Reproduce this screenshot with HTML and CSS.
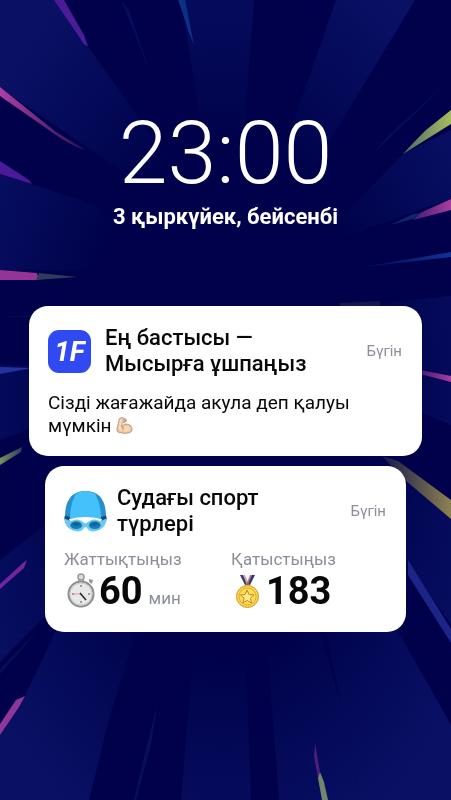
FILE: index.html
```
<!DOCTYPE html>
<html lang="kk">
<head>
    <meta charset="UTF-8">
    <meta name="viewport" content="width=device-width, initial-scale=1.0">
    <title>Хабарландырулар</title>
    <link rel="stylesheet" href="styles.css">
</head>
<body>
    <!-- Фон с лучами -->
    <svg class="rays" viewBox="0 0 451 800" preserveAspectRatio="xMidYMid slice" aria-hidden="true">
        <defs>
            <radialGradient id="beam" gradientUnits="userSpaceOnUse" cx="0" cy="0" r="1" gradientTransform="translate(225 400) scale(290 490)">
                <stop offset="0.52" stop-color="#00014a"/>
                <stop offset="0.75" stop-color="#040a58"/>
                <stop offset="1" stop-color="#0a1064"/>
            </radialGradient>
            <linearGradient id="pinkLeft">
                <stop offset="0" stop-color="#ac3fa4"/>
                <stop offset="1" stop-color="#241053"/>
            </linearGradient>
            <linearGradient id="pinkRight">
                <stop offset="0" stop-color="#421b74"/>
                <stop offset="1" stop-color="#a83e9f"/>
            </linearGradient>
            <linearGradient id="blueRight">
                <stop offset="0" stop-color="#030958"/>
                <stop offset="1" stop-color="#123293"/>
            </linearGradient>
            <linearGradient id="limeRight">
                <stop offset="0" stop-color="#4c6a68"/>
                <stop offset="1" stop-color="#a6bd5b"/>
            </linearGradient>
            <linearGradient id="goldRight">
                <stop offset="0" stop-color="#15164c"/>
                <stop offset="1" stop-color="#8d8250"/>
            </linearGradient>
            <linearGradient id="limeLeft">
                <stop offset="0" stop-color="#76915f"/>
                <stop offset="1" stop-color="#303c5b"/>
            </linearGradient>
        </defs>
        <rect width="451" height="800" fill="#00014a"/>
        <g fill="url(#beam)">
            <path d="M0 0H55L87 45L225 240L150 190L0 88Z"/>
            <path d="M181 0H254L240 190H212Z"/>
            <path d="M336 0H415L300 190H270Z"/>
            <path d="M451 130V198L310 250L403 154Z"/>
            <path d="M0 174L95 205L180 270L0 270Z"/>
            <path d="M451 296V425L320 370V310Z"/>
            <path d="M0 365L130 370V390L0 440Z"/>
            <path d="M0 560L130 460V530L0 662Z"/>
            <path d="M400 465L451 519V625L330 450Z"/>
            <path d="M80 580L24 698L0 735V800H89L110 715L150 590Z"/>
            <path d="M198 600L181 800H251L244 600Z"/>
            <path d="M264 600L279 800H360L341 705L310 600Z"/>
            <path d="M380 600L451 725V800H360L341 705L320 600Z"/>
        </g>
        <path d="M54 0H64L84 35L88 46Q83 45 80 38Z" fill="#4b1b98"/>
        <path d="M121 0L129 10L150 72Z" fill="#060c5b"/>
        <path d="M178 0H185L194 45Q188 32 185 20Z" fill="#0c3086"/>
        <path d="M0 87L56 132L87 151Q70 145 56 135L0 96Z" fill="url(#pinkLeft)"/>
        <path d="M0 161L29 180L32 184L0 174Z" fill="#4b1a9b"/>
        <path d="M0 270L37 273L39 280H0Z" fill="#943596"/>
        <path d="M39 273L77 277L36 280Z" fill="#333b5c"/>
        <path d="M451 79L372 155L388 136Z" fill="#060e54"/>
        <path d="M451 110V124L403 154Q412 144 426 130Z" fill="url(#limeRight)"/>
        <path d="M451 199V210L413 220L420 213Z" fill="url(#pinkRight)"/>
        <path d="M390 225L413 214L421 213L413 219Z" fill="#0d2470"/>
        <path d="M363 267L451 252V257Z" fill="url(#blueRight)"/>
        <path d="M340 303L380 301V306H340Z" fill="#14154e"/>
        <path d="M420 370L451 376V382L420 374Z" fill="url(#pinkRight)"/>
        <path d="M0 367L32 368L0 374Z" fill="#2531a0"/>
        <path d="M0 317L30 315L30 317Z" fill="#040b53"/>
        <path d="M0 458L20 448L22 447L21 452L0 465Z" fill="url(#limeLeft)"/>
        <path d="M382 456L398 461L451 500V519L405 480Z" fill="url(#goldRight)"/>
        <path d="M408 560L451 629V643L408 575Z" fill="#1c2486"/>
        <path d="M0 584L24 562L27 560L24 568L0 589Z" fill="#6f279b"/>
        <path d="M0 669L40 628L20 652L0 674Z" fill="#060d52"/>
        <path d="M0 724L16 700L25 696L19 707L0 735Z" fill="#8d3798"/>
        <path d="M157 705L151 745L136 800H134L147 745Z" fill="#080f5a"/>
        <path d="M315 743L320 772L318 778L314 757Z" fill="#4d1d79"/>
        <path d="M320 772L324 782L328 800H322L318 778Z" fill="#71866c"/>
    </svg>

    <main class="lock-screen">
        <header class="clock">
            <time class="clock-time">23:00</time>
            <p class="clock-date">3 қыркүйек, бейсенбі</p>
        </header>

        <section class="notifications">
            <article class="card">
                <div class="card-head">
                    <div class="app-icon">1F</div>
                    <h2 class="card-title">Ең бастысы —<br>Мысырға ұшпаңыз</h2>
                    <span class="card-date">Бүгін</span>
                </div>
                <p class="card-text">Сізді жағажайда акула деп қалуы<br>мүмкін
                    <svg class="emoji" viewBox="0 0 36 36" role="img" aria-label="Бицепс">
                        <path d="M9 2Q15 0 19 4Q23 4 22 9L17 12Q14 12 13 10L12 20Q17 13 24 15Q33 17 34 24Q35 30 30 33Q18 37 4 32Q0 29 3 21L6 8Q6 3 9 2Z" fill="#e9c6a0" stroke="#a98566" stroke-width="1.5"/>
                        <path d="M8 7L6 24Q7 29 14 30Q8 24 12 10L16 7Q11 3 8 7Z" fill="#f7dfbd"/>
                        <path d="M15 25Q19 17 27 19Q31 23 28 29Q22 33 16 30" fill="#f5d7b3"/>
                        <path d="M12 20Q17 22 15 27M18 5L14 7M21 7L16 9" fill="none" stroke="#a58163" stroke-width="1.5"/>
                    </svg>
                </p>
            </article>

            <article class="card card-small">
                <div class="card-head card-head-tight">
                    <svg class="cap-icon" viewBox="0 0 44 44" aria-hidden="true">
                        <path d="M1 28Q1 1 22 1T43 28L38 32H6Z" fill="#2591cf"/>
                        <path d="M1 26L7 28V33L0 30ZM43 26L37 28V33L44 30Z" fill="#164b78"/>
                        <path d="M12 4Q22-2 32 4Q38 15 38 30Q22 26 6 30Q6 15 12 4Z" fill="#45c1fa"/>
                        <path d="M5 30Q22 25 39 30L36 35H8Z" fill="#fff"/>
                        <path d="M0 29L7 32Q14 28 20 33Q22 35 24 33Q30 28 37 32L44 29Q43 38 36 41Q27 45 23 38H21Q17 45 8 41Q1 38 0 29Z" fill="#6bc8f2"/>
                        <ellipse cx="12.5" cy="36" rx="6" ry="4" fill="#167bb5"/>
                        <ellipse cx="31.5" cy="36" rx="6" ry="4" fill="#167bb5"/>
                        <path d="M8 35Q12 31 17 35L12 37ZM27 35Q32 31 36 35L31 37Z" fill="#0f629a"/>
                    </svg>
                    <h2 class="card-title">Судағы спорт<br>түрлері</h2>
                    <span class="card-date">Бүгін</span>
                </div>
                <div class="stats">
                    <div class="stat">
                        <h3 class="stat-label">Жаттықтыңыз</h3>
                        <p class="stat-value">
                            <svg class="stat-icon" viewBox="0 0 35 36" aria-hidden="true">
                                <path d="M15 8V4H19V8" fill="none" stroke="#999" stroke-width="1.5"/>
                                <circle cx="17" cy="4" r="3" fill="#ddd" stroke="#999" stroke-width="1.5"/>
                                <path d="M25 6L29 7L28 11L25 9Z" fill="#999"/>
                                <circle cx="17" cy="21" r="12.5" fill="#e9e8e9" stroke="#8c8c8c" stroke-width="2"/>
                                <circle cx="17" cy="21" r="11" fill="none" stroke="#c8c8c8"/>
                                <path d="M17 12V14M17 28V30M8 21H10M24 21H26" stroke="#555"/>
                                <path d="M10 21L17 21" stroke="#e39b9b"/>
                                <path d="M16 20L22 27" stroke="#222" stroke-width="1.5"/>
                            </svg>
                            <strong>60</strong>
                            <span class="stat-unit">мин</span>
                        </p>
                    </div>
                    <div class="stat">
                        <h3 class="stat-label">Қатыстыңыз</h3>
                        <p class="stat-value">
                            <svg class="stat-icon" viewBox="0 0 35 36" aria-hidden="true">
                                <path d="M9 2H12L18 12H14Z" fill="#373b72"/>
                                <path d="M12 2H14L18 11L16 12Z" fill="#d6a4a6"/>
                                <path d="M24 2H21L15 12H19Z" fill="#31356c"/>
                                <path d="M21 2H19L16 10L17 12Z" fill="#9d718f"/>
                                <circle cx="16.5" cy="13" r="2" fill="none" stroke="#b78a2c"/>
                                <circle cx="16.5" cy="23.5" r="11" fill="#fbd34b" stroke="#d19b27"/>
                                <circle cx="16.5" cy="23.5" r="8.5" fill="#ffdd5c" stroke="#e3ab2d"/>
                                <path d="M16 17L18 21.5L23 22L19.5 25L20.5 30L16 27.5L12 30L13 25L9.5 22L14 21.5Z" fill="#ffec83" stroke="#bd8723"/>
                            </svg>
                            <strong>183</strong>
                        </p>
                    </div>
                </div>
            </article>
        </section>
    </main>
</body>
</html>
```
FILE: styles.css
```
* {
    box-sizing: border-box;
}
body {
    font-family: Roboto, 'Noto Sans', sans-serif;
    margin: 0;
    min-height: 100vh;
    background-color: #00014a;
    color: #080808;
}
h2, h3, p {
    margin: 0;
}
.rays {
    position: fixed;
    inset: 0;
    width: 100%;
    height: 100%;
    z-index: -1;
}
.lock-screen {
    max-width: 560px;
    margin: 0 auto;
    padding: 109px 29px 40px;
}
.clock {
    color: #fff;
    text-align: center;
    margin-bottom: 77px;
}
.clock-time {
    display: block;
    font-size: 88px;
    font-weight: 300;
    line-height: 88px;
}
.clock-date {
    margin-top: 7px;
    font-size: 22px;
    font-weight: 700;
    line-height: 25px;
}
.notifications {
    display: flex;
    flex-direction: column;
    gap: 10px;
}
.card {
    padding: 19px 20px 19px 19px;
    border-radius: 19px;
    background-color: #fff;
}
.card-small {
    margin: 0 16px;
}
.card-head {
    display: flex;
    align-items: center;
    gap: 14px;
}
.card-head-tight {
    gap: 10px;
}
.app-icon {
    display: flex;
    align-items: center;
    justify-content: center;
    flex: none;
    width: 43px;
    height: 43px;
    border-radius: 11px;
    background-color: #3049f2;
    color: #fff;
    font-size: 28px;
    font-style: italic;
    font-weight: 700;
}
.cap-icon {
    flex: none;
    width: 43px;
    height: 43px;
}
.card-title {
    flex: 1;
    font-size: 22px;
    font-weight: 500;
    line-height: 26px;
}
.card-date {
    color: #8b8f98;
    font-size: 15px;
}
.card-text {
    margin-top: 14px;
    font-size: 19px;
    line-height: 23px;
}
.emoji {
    width: 17px;
    height: 17px;
    vertical-align: -2px;
}
.stats {
    display: grid;
    grid-template-columns: 1fr 1fr;
    gap: 12px;
    margin-top: 12px;
}
.stat-label {
    color: #8b8f98;
    font-size: 17px;
    font-weight: 400;
    line-height: 20px;
}
.stat-value {
    display: flex;
    align-items: baseline;
    line-height: 44px;
}
.stat-value strong {
    font-size: 38px;
    font-weight: 700;
}
.stat-icon {
    align-self: center;
    width: 35px;
    height: 36px;
}
.stat-unit {
    margin-left: 6px;
    color: #8b8f98;
    font-size: 17px;
    line-height: 20px;
}
```
